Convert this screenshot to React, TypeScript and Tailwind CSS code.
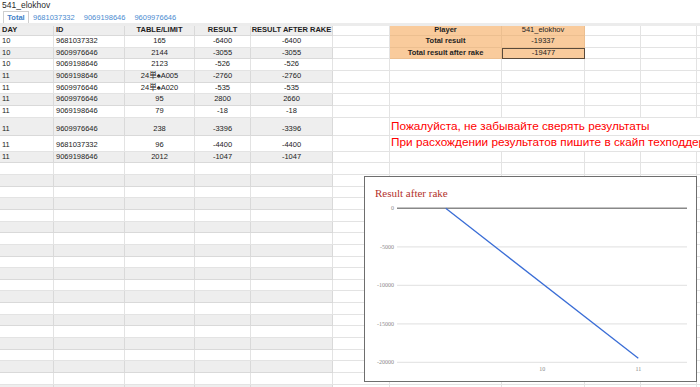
import React from "react";

const W = [
  "w-[54px]",
  "w-[71px]",
  "w-[70px]",
  "w-[56px]",
  "w-[82px]",
  "w-[57px]",
  "w-[112px]",
  "w-[83px]",
  "w-[56px]",
  "w-[56px]",
];

type DataRow = {
  h: string;
  v: string[];
  red?: string;
};

const rows: DataRow[] = [
  { h: "h-[11.67px]", v: ["10", "9681037332", "165", "-6400", "-6400"] },
  { h: "h-[11.67px]", v: ["10", "9609976646", "2144", "-3055", "-3055"] },
  { h: "h-[11.67px]", v: ["10", "9069198646", "2123", "-526", "-526"] },
  { h: "h-[11.67px]", v: ["11", "9069198646", "24単♠A005", "-2760", "-2760"] },
  { h: "h-[11.67px]", v: ["11", "9609976646", "24単♠A020", "-535", "-535"] },
  { h: "h-[11.67px]", v: ["11", "9609976646", "95", "2800", "2660"] },
  { h: "h-[11.67px]", v: ["11", "9069198646", "79", "-18", "-18"] },
  {
    h: "h-[18px]",
    v: ["11", "9609976646", "238", "-3396", "-3396"],
    red: "Пожалуйста, не забывайте сверять результаты",
  },
  {
    h: "h-[16px]",
    v: ["11", "9681037332", "96", "-4400", "-4400"],
    red: "При расхождении результатов пишите в скайп техподдержку",
  },
  { h: "h-[11.67px]", v: ["11", "9069198646", "2012", "-1047", "-1047"] },
];

const emptyCount = 20;

function DataCells({
  v,
  gray,
  bold,
}: {
  v: string[];
  gray: boolean;
  bold?: boolean;
}) {
  return (
    <>
      {v.map((t, i) => (
        <div
          key={i}
          className={`${W[i]} shrink-0 flex items-end pb-[1.5px] px-[2px] border-r border-b whitespace-nowrap overflow-hidden ${
            i < 2 ? "justify-start" : "justify-center"
          } ${gray ? "bg-[#eeeeee] border-[#d9d9d9]" : "bg-white border-[#e3e3e3]"} ${
            bold ? "font-bold text-[#1e1e1e]" : "text-[#222222]"
          }`}
        >
          {t}
        </div>
      ))}
    </>
  );
}

function Empty({ i }: { i: number }) {
  return <div className={`${W[i]} shrink-0 border-r border-b border-[#e3e3e3]`} />;
}

function Rest() {
  return <div className="flex-1 border-b border-[#e3e3e3]" />;
}

function Orange({
  i,
  text,
  bold,
  boxed,
}: {
  i: number;
  text: string;
  bold?: boolean;
  boxed?: boolean;
}) {
  return (
    <div
      className={`${W[i]} shrink-0 flex items-end justify-center pb-[1.5px] bg-[#f9cb9c] whitespace-nowrap ${
        boxed ? "border border-[#5a4a3a]" : "border-r border-b border-[#ecbf90]"
      } ${bold ? "font-bold text-[#1e1e1e]" : "text-[#222222]"}`}
    >
      {text}
    </div>
  );
}

function Chart() {
  const grid = [
    { y: 32.3, l: "0" },
    { y: 70.8, l: "-5000" },
    { y: 109.3, l: "-10000" },
    { y: 147.8, l: "-15000" },
    { y: 186.3, l: "-20000" },
  ];
  return (
    <div className="absolute left-[364px] top-[176px] w-[333px] h-[206px] bg-white border border-[#6e6e6e]">
      <svg width="331" height="204" viewBox="1 1 331 204" className="block">
        <text
          x="11"
          y="21"
          fontFamily="'Liberation Serif', serif"
          fontSize="11"
          fill="#b3322b"
        >
          Result after rake
        </text>
        {grid.map((g, k) =>
          k === 0 ? null : (
            <line
              key={g.l}
              x1="33"
              x2="323"
              y1={g.y}
              y2={g.y}
              stroke="#e6e6e6"
              strokeWidth="1.3"
            />
          )
        )}
        <line x1="33" x2="323" y1="32.3" y2="32.3" stroke="#888888" strokeWidth="1.4" />
        {grid.map((g) => (
          <text
            key={g.l + "t"}
            x="30"
            y={g.y + 2}
            textAnchor="end"
            fontFamily="'Liberation Serif', serif"
            fontSize="6"
            fill="#8a8a8a"
          >
            {g.l}
          </text>
        ))}
        <text
          x="178.3"
          y="195"
          textAnchor="middle"
          fontFamily="'Liberation Serif', serif"
          fontSize="6"
          fill="#8a8a8a"
        >
          10
        </text>
        <text
          x="274.3"
          y="195"
          textAnchor="middle"
          fontFamily="'Liberation Serif', serif"
          fontSize="6"
          fill="#8a8a8a"
        >
          11
        </text>
        <line
          x1="81.7"
          y1="32.3"
          x2="274.3"
          y2="182.3"
          stroke="#3a6dd6"
          strokeWidth="1.3"
        />
      </svg>
    </div>
  );
}

export default function App() {
  return (
    <div
      className="relative w-[700px] h-[387px] overflow-hidden bg-white text-[7.5px] leading-[9px]"
      style={{ fontFamily: "'Liberation Sans', Arial, 'Noto Sans CJK JP', sans-serif" }}
    >
      {/* title */}
      <div className="h-[11px] pl-[2px] text-[8.5px] leading-[10px] text-[#2a2a2a]">541_elokhov</div>
      {/* tabs */}
      <div className="h-[12px] flex items-end pl-[3px]">
        <div className="h-[12px] w-[26px] flex items-center justify-center border border-b-0 border-[#cfcfcf] bg-white text-[#3d7fc7] font-bold">
          Total
        </div>
        <div className="flex items-center h-[12px] text-[#4a8bd0] pl-[4px] gap-[9px]">
          <span>9681037332</span>
          <span>9069198646</span>
          <span>9609976646</span>
        </div>
      </div>
      <div className="h-[3px] bg-[#ececec]" />

      {/* header row */}
      <div className="flex h-[10px] w-[700px]">
        <DataCells v={["DAY", "ID", "TABLE/LIMIT", "RESULT", "RESULT AFTER RAKE"]} gray bold />
        <Empty i={5} />
        <Orange i={6} text="Player" bold />
        <Orange i={7} text="541_elokhov" />
        <Empty i={8} />
        <Empty i={9} />
        <Rest />
      </div>

      {rows.map((r, idx) => {
        const gray = idx % 2 === 1;
        return (
          <div key={idx} className={`flex ${r.h} w-[700px]`}>
            <DataCells v={r.v} gray={gray} />
            <Empty i={5} />
            {idx === 0 ? (
              <>
                <Orange i={6} text="Total result" bold />
                <Orange i={7} text="-19337" />
                <Empty i={8} />
                <Empty i={9} />
                <Rest />
              </>
            ) : idx === 1 ? (
              <>
                <Orange i={6} text="Total result after rake" bold />
                <Orange i={7} text="-19477" boxed />
                <Empty i={8} />
                <Empty i={9} />
                <Rest />
              </>
            ) : r.red ? (
              <div className="flex-1 flex items-end pb-[1.5px] pl-[1px] border-b border-[#e3e3e3] whitespace-nowrap text-[11.8px] leading-[13px] text-[#ff0000]">
                {r.red}
              </div>
            ) : (
              <>
                <Empty i={6} />
                <Empty i={7} />
                <Empty i={8} />
                <Empty i={9} />
                <Rest />
              </>
            )}
          </div>
        );
      })}

      {Array.from({ length: emptyCount }).map((_, k) => {
        const gray = (rows.length + k) % 2 === 1;
        return (
          <div key={"e" + k} className="flex h-[11.67px] w-[700px]">
            <DataCells v={["", "", "", "", ""]} gray={gray} />
            <Empty i={5} />
            <Empty i={6} />
            <Empty i={7} />
            <Empty i={8} />
            <Empty i={9} />
            <Rest />
          </div>
        );
      })}

      <Chart />
    </div>
  );
}
